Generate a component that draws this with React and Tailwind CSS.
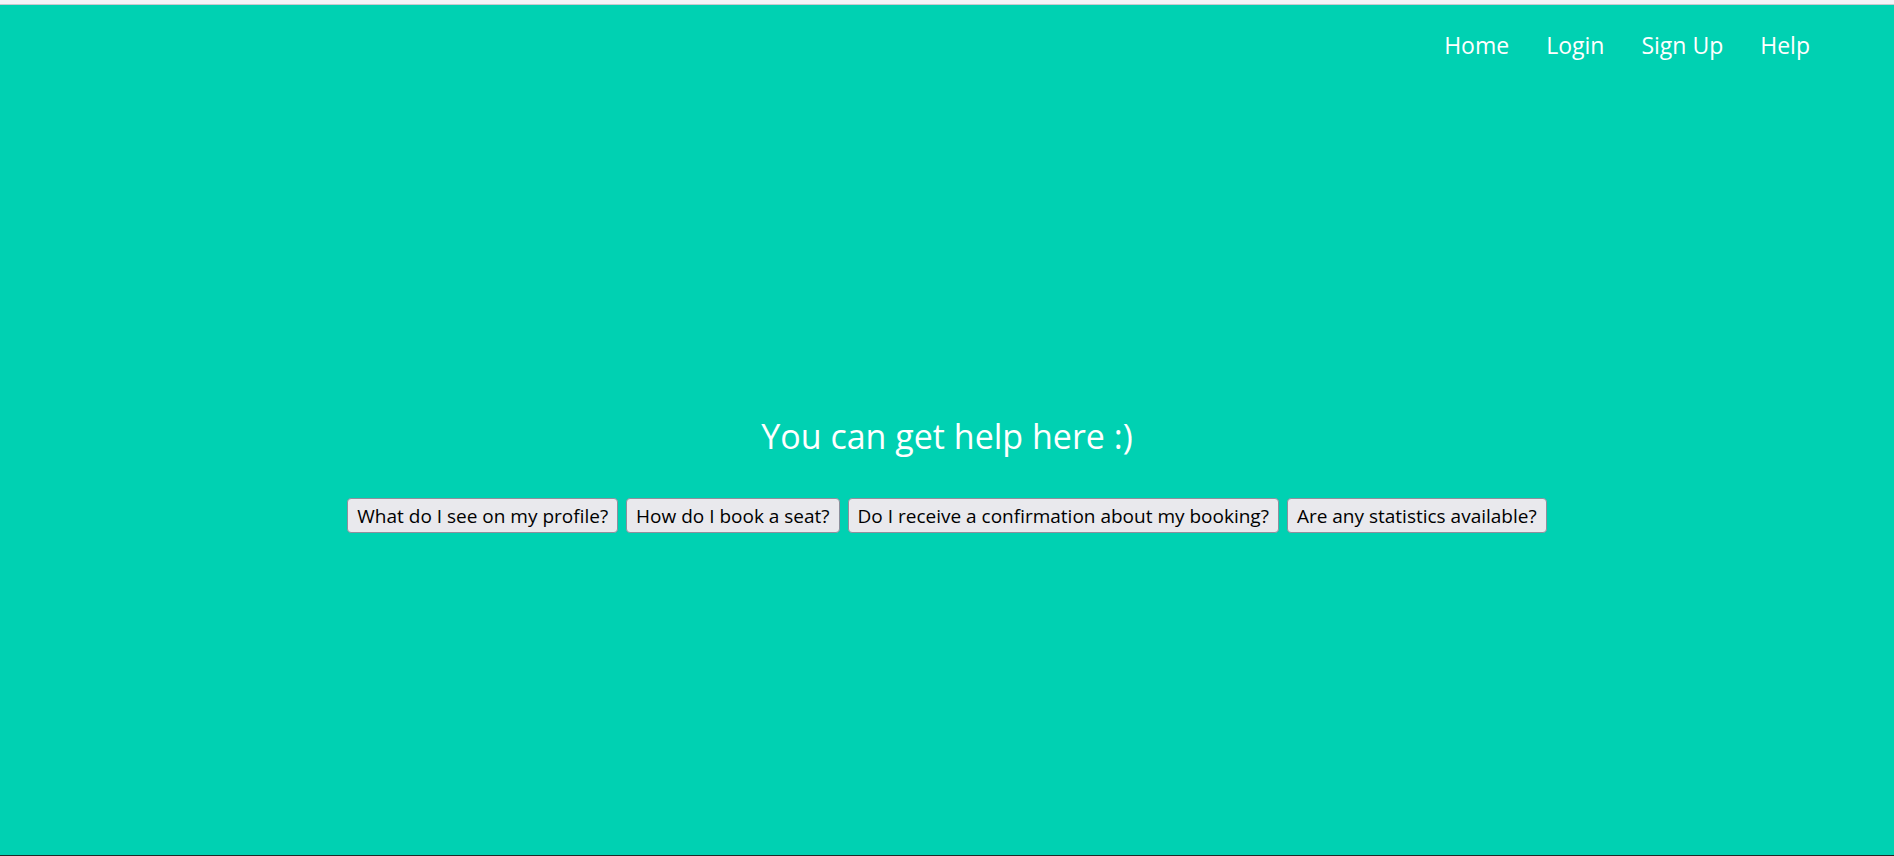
import React from "react";

const questions = [
  "What do I see on my profile?",
  "How do I book a seat?",
  "Do I receive a confirmation about my booking?",
  "Are any statistics available?",
];

export default function App() {
  return (
    <div
      className="flex h-[856px] w-full flex-col overflow-hidden bg-[#00d1b2]"
      style={{ fontFamily: '"Open Sans", "Noto Sans", sans-serif' }}
    >
      <div className="h-[4px] bg-[#f4f3f7]" />
      <div className="h-[1px] bg-[#c9c9cd]" />
      <nav className="flex justify-end gap-[37px] pr-[84px] pt-[28px] text-[23px] leading-[24px] text-white">
        <a href="#">Home</a>
        <a href="#">Login</a>
        <a href="#">Sign Up</a>
        <a href="#">Help</a>
      </nav>
      <main className="flex flex-1 flex-col items-center">
        <h1 className="mt-[359px] text-[34px] leading-[40px] text-white">You can get help here :)</h1>
        <div className="mt-[42px] flex gap-[8px]">
          {questions.map((q) => (
            <button
              key={q}
              className="h-[35px] rounded-[4px] border border-[#8f8f9d] bg-[#e9e9ed] px-[9px] text-[19px] leading-[22px] text-black"
            >
              {q}
            </button>
          ))}
        </div>
      </main>
      <div className="h-[1px] bg-[#1f2a27]" />
    </div>
  );
}
